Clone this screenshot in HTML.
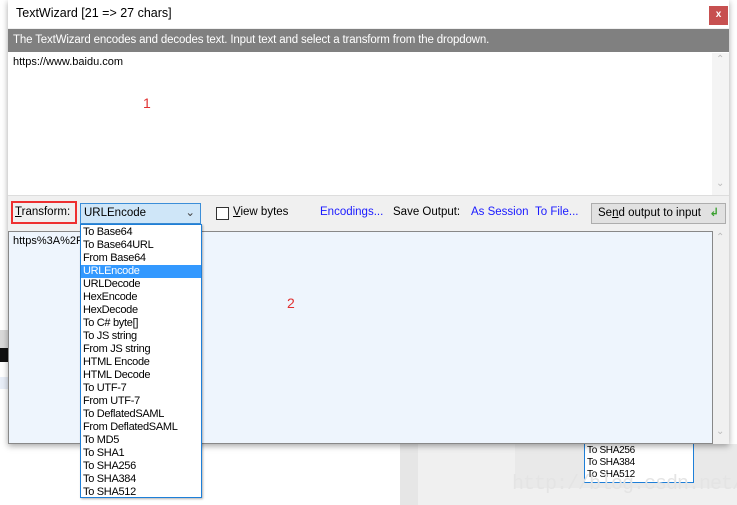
<!DOCTYPE html>
<html><head><style>
*{margin:0;padding:0;box-sizing:border-box}
body{width:737px;height:505px;position:relative;overflow:hidden;background:#fff;font-family:"Liberation Sans","DejaVu Sans",sans-serif;font-size:11.5px;color:#000}
.a{position:absolute}
.dd div{height:13px;line-height:13px;padding-left:2px;font-size:11px;white-space:nowrap;letter-spacing:-0.3px}
.link{color:#1a1aff}
</style></head><body>
<div class="a" style="left:0;top:330px;width:8px;height:32px;background:#d9d9d9"></div>
<div class="a" style="left:0;top:348px;width:8px;height:14px;background:#111"></div>
<div class="a" style="left:0;top:377px;width:8px;height:12px;background:#e8eef8"></div>
<div class="a" style="left:400px;top:444px;width:337px;height:61px;background:#f0f0f0"></div>
<div class="a" style="left:400px;top:444px;width:18px;height:61px;background:#e6e6e6"></div>
<div class="a" style="left:515px;top:444px;width:222px;height:44px;background:#e9e9e9"></div>
<div class="a dd" style="left:584px;top:444px;width:110px;height:39px;background:#fff;border:1px solid #1e7fd8;border-top:none;padding-top:1px"><div style="height:12px;line-height:12px;font-size:10px">To SHA256</div><div style="height:12px;line-height:12px;font-size:10px">To SHA384</div><div style="height:12px;line-height:12px;font-size:10px">To SHA512</div></div>
<div class="a" style="left:512px;top:473px;font-family:'Liberation Mono',monospace;font-size:20px;color:#e4e4e4;letter-spacing:-1px">http://blog.csdn.net/</div>
<div class="a" style="left:8px;top:0;width:721px;height:444px;background:#f0f0f0;box-shadow:0 2px 6px rgba(0,0,0,.35)">
 <div class="a" style="left:0;top:0;width:721px;height:28px;background:#fff"></div>
 <div class="a" style="left:8px;top:6px;font-size:12.5px">TextWizard [21 =&gt; 27 chars]</div>
 <div class="a" style="left:701px;top:6px;width:19px;height:19px;background:#c75050;color:#fff;font-size:10px;text-align:center;line-height:18px;font-weight:bold">x</div>
 <div class="a" style="left:0;top:29px;width:721px;height:23px;background:#808080;color:#fff;font-size:11.5px;line-height:23px;padding-left:5px;letter-spacing:-0.15px">The TextWizard encodes and decodes text. Input text and select a transform from the dropdown.</div>
 <div class="a" style="left:0;top:52px;width:721px;height:144px;background:#fff;border-bottom:1px solid #ddd"></div>
 <div class="a" style="left:704px;top:53px;width:17px;height:142px;background:#f4f4f4"></div>
 <div class="a" style="left:708px;top:54px;color:#bbb;font-size:10px">&#8963;</div>
 <div class="a" style="left:708px;top:178px;color:#bbb;font-size:10px">&#8964;</div>
 <div class="a" style="left:5px;top:56px;font-size:11px">https://www.baidu.com</div>
 <div class="a" style="left:135px;top:95px;color:#e03030;font-size:14px">1</div>
 <div class="a" style="left:3px;top:201px;width:66px;height:23px;border:2px solid #ee3030"></div>
 <div class="a" style="left:7px;top:206px"><u>T</u>ransform:</div>
 <div class="a" style="left:72px;top:203px;width:121px;height:21px;background:#cfe6f8;border:1px solid #3c8ed8;line-height:19px;padding-left:3px">URLEncode<span style="position:absolute;right:5px;top:0;color:#444">&#8964;</span></div>
 <div class="a" style="left:208px;top:207px;width:13px;height:13px;border:1px solid #333;background:#fff"></div>
 <div class="a" style="left:225px;top:206px"><u>V</u>iew bytes</div>
 <div class="a link" style="left:312px;top:206px">Encodings...</div>
 <div class="a" style="left:385px;top:206px">Save Output:</div>
 <div class="a link" style="left:463px;top:206px">As Session</div>
 <div class="a link" style="left:527px;top:206px">To File...</div>
 <div class="a" style="left:583px;top:203px;width:135px;height:21px;background:#e1e1e1;border:1px solid #adadad;line-height:19px;padding-left:6px">Se<u>n</u>d output to input <span style="color:#3aa030;font-weight:bold;position:absolute;right:6px">&#8626;</span></div>
 <div class="a" style="left:0;top:231px;width:705px;height:213px;background:#eef5fd;border:1px solid #888"></div>
 <div class="a" style="left:705px;top:231px;width:16px;height:213px;background:#f0f0f0"></div>
 <div class="a" style="left:708px;top:232px;color:#bbb;font-size:10px">&#8963;</div>
 <div class="a" style="left:708px;top:426px;color:#bbb;font-size:10px">&#8964;</div>
 <div class="a" style="left:5px;top:235px;font-size:11px">https%3A%2F</div>
 <div class="a" style="left:279px;top:295px;color:#e03030;font-size:14px">2</div>
</div>
<div class="a dd" style="left:80px;top:224px;width:122px;height:274px;background:#fff;border:1px solid #1e7fd8;padding-top:1px;box-shadow:1px 1px 2px rgba(0,0,0,.3)">
<div>To Base64</div><div>To Base64URL</div><div>From Base64</div><div style="background:#3399ff;color:#fff">URLEncode</div><div>URLDecode</div><div>HexEncode</div><div>HexDecode</div><div>To C# byte[]</div><div>To JS string</div><div>From JS string</div><div>HTML Encode</div><div>HTML Decode</div><div>To UTF-7</div><div>From UTF-7</div><div>To DeflatedSAML</div><div>From DeflatedSAML</div><div>To MD5</div><div>To SHA1</div><div>To SHA256</div><div>To SHA384</div><div>To SHA512</div>
</div>
</body></html>
